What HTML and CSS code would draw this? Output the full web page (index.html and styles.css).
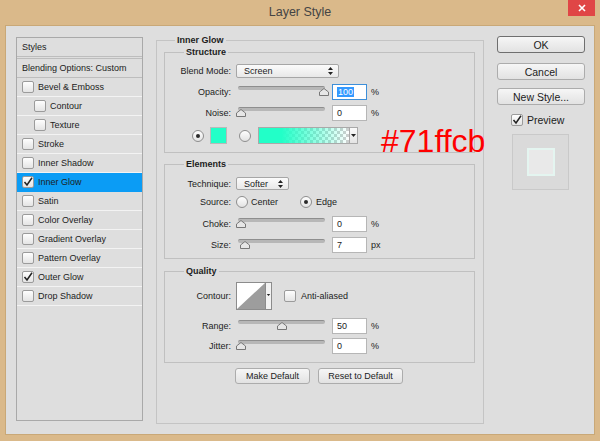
FILE: index.html
```html
<!DOCTYPE html>
<html lang="en">
<head>
    <meta charset="UTF-8">
    <title>Layer Style</title>
    <link rel="stylesheet" href="styles.css">
</head>
<body>

    <div class="window">

        <!-- Title Bar -->
        <div class="titlebar">
            <span></span>
            <span class="title">Layer Style</span>
            <span class="close">
                <svg width="8" height="8" viewBox="0 0 8 8"><path d="M1 1 L7 7 M7 1 L1 7" stroke="#fff" stroke-width="1.6"/></svg>
            </span>
        </div>

        <div class="frame">

            <!-- Styles List -->
            <div class="style-list">
                <div class="item head">Styles</div>
                <div class="item head blend">Blending Options: Custom</div>
                <div class="item"><span class="check"></span>Bevel &amp; Emboss</div>
                <div class="item sub"><span class="check"></span>Contour</div>
                <div class="item sub"><span class="check"></span>Texture</div>
                <div class="item"><span class="check"></span>Stroke</div>
                <div class="item"><span class="check"></span>Inner Shadow</div>
                <div class="item active"><span class="check"><svg width="10" height="10" viewBox="0 0 10 10"><path d="M1.5 5 L4 8 L9 0.8" fill="none" stroke="#222" stroke-width="1.5"/></svg></span>Inner Glow</div>
                <div class="item"><span class="check"></span>Satin</div>
                <div class="item"><span class="check"></span>Color Overlay</div>
                <div class="item"><span class="check"></span>Gradient Overlay</div>
                <div class="item"><span class="check"></span>Pattern Overlay</div>
                <div class="item"><span class="check"><svg width="10" height="10" viewBox="0 0 10 10"><path d="M1.5 5 L4 8 L9 0.8" fill="none" stroke="#222" stroke-width="1.5"/></svg></span>Outer Glow</div>
                <div class="item"><span class="check"></span>Drop Shadow</div>
            </div>

            <!-- Inner Glow Panel -->
            <fieldset class="panel">
                <legend>Inner Glow</legend>

                <fieldset class="group structure">
                    <legend>Structure</legend>
                    <div class="row r-blend">
                        <span class="lbl">Blend Mode:</span>
                        <div class="select blend-select">Screen
                            <svg class="updown" width="5" height="8" viewBox="0 0 5 8"><path d="M0 3 L2.5 0 L5 3 Z M0 5 L2.5 8 L5 5 Z" fill="#222"/></svg>
                        </div>
                    </div>
                    <div class="row r-opacity">
                        <span class="lbl">Opacity:</span>
                        <div class="slider"><div class="track"></div><svg class="thumb" style="left: 83px" width="10" height="8" viewBox="0 0 10 8"><polygon points="5,0.5 9.5,4 9.5,7.5 0.5,7.5 0.5,4" fill="#e6e6e6" stroke="#777"/></svg></div>
                        <div class="field focus"><span class="sel">100</span></div>
                        <span class="unit">%</span>
                    </div>
                    <div class="row r-noise">
                        <span class="lbl">Noise:</span>
                        <div class="slider"><div class="track"></div><svg class="thumb" style="left: 0px" width="10" height="8" viewBox="0 0 10 8"><polygon points="5,0.5 9.5,4 9.5,7.5 0.5,7.5 0.5,4" fill="#e6e6e6" stroke="#777"/></svg></div>
                        <div class="field">0</div>
                        <span class="unit">%</span>
                    </div>
                    <div class="row r-color">
                        <span class="radio on"></span>
                        <span class="swatch"></span>
                        <span class="radio"></span>
                        <div class="gradient">
                            <span class="ramp"></span>
                            <span class="drop"><svg width="5" height="3" viewBox="0 0 5 3"><path d="M0 0 L5 0 L2.5 3 Z" fill="#222"/></svg></span>
                        </div>
                    </div>
                </fieldset>

                <fieldset class="group elements">
                    <legend>Elements</legend>
                    <div class="row r-technique">
                        <span class="lbl">Technique:</span>
                        <div class="select tech-select">Softer
                            <svg class="updown" width="5" height="8" viewBox="0 0 5 8"><path d="M0 3 L2.5 0 L5 3 Z M0 5 L2.5 8 L5 5 Z" fill="#222"/></svg>
                        </div>
                    </div>
                    <div class="row r-source">
                        <span class="lbl">Source:</span>
                        <span class="radio"></span>
                        <span class="opt">Center</span>
                        <span class="radio on edge"></span>
                        <span class="opt">Edge</span>
                    </div>
                    <div class="row r-choke">
                        <span class="lbl">Choke:</span>
                        <div class="slider"><div class="track"></div><svg class="thumb" style="left: 0px" width="10" height="8" viewBox="0 0 10 8"><polygon points="5,0.5 9.5,4 9.5,7.5 0.5,7.5 0.5,4" fill="#e6e6e6" stroke="#777"/></svg></div>
                        <div class="field">0</div>
                        <span class="unit">%</span>
                    </div>
                    <div class="row r-size">
                        <span class="lbl">Size:</span>
                        <div class="slider"><div class="track"></div><svg class="thumb" style="left: 4px" width="10" height="8" viewBox="0 0 10 8"><polygon points="5,0.5 9.5,4 9.5,7.5 0.5,7.5 0.5,4" fill="#e6e6e6" stroke="#777"/></svg></div>
                        <div class="field">7</div>
                        <span class="unit">px</span>
                    </div>
                </fieldset>

                <fieldset class="group quality">
                    <legend>Quality</legend>
                    <div class="row r-contour">
                        <span class="lbl">Contour:</span>
                        <div class="contour">
                            <svg width="36" height="28" viewBox="0 0 36 28">
                                <rect x="0.5" y="0.5" width="35" height="27" fill="#fff" stroke="#8c8c8c"/>
                                <polygon points="1,27 29,1 29,27" fill="#9d9d9d"/>
                                <rect x="29.5" y="0.5" width="6" height="27" fill="#f2f2f2" stroke="#8c8c8c"/>
                                <path d="M30.8 12 L34.2 12 L32.5 14 Z" fill="#222"/>
                            </svg>
                        </div>
                        <span class="check anti"></span>
                        <span class="opt">Anti-aliased</span>
                    </div>
                    <div class="row r-range">
                        <span class="lbl">Range:</span>
                        <div class="slider"><div class="track"></div><svg class="thumb" style="left: 41px" width="10" height="8" viewBox="0 0 10 8"><polygon points="5,0.5 9.5,4 9.5,7.5 0.5,7.5 0.5,4" fill="#e6e6e6" stroke="#777"/></svg></div>
                        <div class="field">50</div>
                        <span class="unit">%</span>
                    </div>
                    <div class="row r-jitter">
                        <span class="lbl">Jitter:</span>
                        <div class="slider"><div class="track"></div><svg class="thumb" style="left: 0px" width="10" height="8" viewBox="0 0 10 8"><polygon points="5,0.5 9.5,4 9.5,7.5 0.5,7.5 0.5,4" fill="#e6e6e6" stroke="#777"/></svg></div>
                        <div class="field">0</div>
                        <span class="unit">%</span>
                    </div>
                </fieldset>

                <div class="defaults">
                    <button class="btn small make">Make Default</button>
                    <button class="btn small reset">Reset to Default</button>
                </div>
            </fieldset>

            <!-- Dialog Actions -->
            <div class="actions">
                <button class="btn big ok">OK</button>
                <button class="btn big cancel">Cancel</button>
                <button class="btn big newstyle">New Style...</button>
                <div class="preview-row">
                    <span class="check"><svg width="10" height="10" viewBox="0 0 10 10"><path d="M1.5 5 L4 8 L9 0.8" fill="none" stroke="#222" stroke-width="1.5"/></svg></span>
                    <span>Preview</span>
                </div>
                <div class="preview-box"><div class="preview-inner"></div></div>
            </div>
        </div>

        <!-- colour note laid over the dialog -->
        <div class="hex-note">#71ffcb</div>
    </div>

</body>
</html>
```

FILE: styles.css
```css
/* General Reset */
* {
    margin: 0;
    padding: 0;
    box-sizing: border-box;
}

body {
    font-family: 'Liberation Sans', Arial, sans-serif;
    color: #1c1c1c;
    background-color: #dab98a;
}

.window {
    position: relative;
    width: 600px;
    height: 441px;
    background-color: #dab98a;
}

/* Title Bar */
.titlebar {
    height: 25px;
    display: grid;
    grid-template-columns: 1fr auto 1fr;
}

.title {
    font-size: 12.5px;
    color: #444;
    line-height: 24px;
}

.close {
    justify-self: end;
    align-self: start;
    width: 27px;
    height: 16px;
    margin-right: 5px;
    background-color: #e04646;
    display: flex;
    align-items: center;
    justify-content: center;
}

/* Dialog Frame */
.frame {
    margin: 0 5px;
    height: 410px;
    border: 1px solid #c9a877;
    background-color: #dedede;
    display: flex;
    align-items: flex-start;
    padding: 8px 9px 0 10px;
}

/* Styles List */
.style-list {
    width: 127px;
    height: 384px;
    margin-top: 3px;
    border: 1px solid #a9a9a9;
    flex: none;
}

.item {
    height: 19px;
    display: flex;
    align-items: center;
    padding-left: 5px;
    font-size: 9px;
    border-bottom: 1px solid #f3f3f3;
}

.item.head {
    border-bottom: 1px solid #bdbdbd;
}

.item.blend {
    height: 20px;
    margin-top: 1px;
    border-top: 1px solid #bdbdbd;
}

.item.sub {
    padding-left: 17px;
}

.item.active {
    background-color: #0b9cf5;
    border-bottom-color: #0b9cf5;
}

.check {
    width: 12px;
    height: 12px;
    flex: none;
    margin-right: 4px;
    border: 1px solid #9b9b9b;
    border-radius: 2px;
    background: linear-gradient(#fefefe, #e4e4e4);
    display: flex;
    align-items: center;
    justify-content: center;
}

/* Main Panel */
fieldset {
    min-width: 0;
}

.panel {
    width: 328px;
    margin-left: 13px;
    border: 1px solid #c4c4c4;
    padding: 0 8px 39px 7px;
    flex: none;
}

legend {
    font-size: 9px;
    font-weight: bold;
    line-height: 12px;
    padding: 0 2px;
}

.panel > legend {
    margin-left: 11px;
}

.group {
    width: 311px;
    border: 1px solid #c0c0c0;
    padding: 0;
}

.group > legend {
    margin-left: 19px;
}

.structure {
    padding-bottom: 8px;
}

.elements {
    margin-top: 5px;
    padding-bottom: 5px;
}

.quality {
    margin-top: 6px;
    padding-bottom: 8px;
}

.row {
    display: flex;
    align-items: center;
    font-size: 9px;
}

.lbl {
    width: 66px;
    margin-right: 5px;
    text-align: right;
    flex: none;
}

.r-blend { margin-top: 6px; height: 14px; }
.r-opacity { margin-top: 6px; height: 16px; }
.r-noise { margin-top: 5px; height: 16px; }
.r-color { margin-top: 6px; height: 17px; padding-left: 27px; }
.r-technique { margin-top: 7px; height: 13px; }
.r-source { margin-top: 6px; height: 12px; }
.r-choke { margin-top: 8px; height: 16px; }
.r-size { margin-top: 5px; height: 16px; }
.r-contour { margin-top: 5px; height: 28px; }
.r-range { margin-top: 8px; height: 16px; }
.r-jitter { margin-top: 4px; height: 16px; }

/* Dropdowns */
.select {
    height: 100%;
    border: 1px solid #a6a6a6;
    border-radius: 2px;
    background: linear-gradient(#fbfbfb, #e8e8e8);
    display: flex;
    align-items: center;
    justify-content: space-between;
    padding: 0 5px 0 7px;
}

.blend-select {
    width: 103px;
}

.tech-select {
    width: 53px;
}

/* Sliders */
.slider {
    position: relative;
    width: 92px;
    height: 16px;
    margin-right: 4px;
    flex: none;
}

.track {
    height: 4px;
    margin: 2px 3px 0 2px;
    border-radius: 2px;
    border-top: 1px solid #8e8e8e;
    background-color: #b7b7b7;
}

.thumb {
    position: absolute;
    top: 4px;
    display: block;
}

/* Number Fields */
.field {
    width: 35px;
    height: 16px;
    flex: none;
    border: 1px solid #b6b6b6;
    background-color: #fff;
    line-height: 14px;
    padding-left: 4px;
}

.field.focus {
    border-color: #3d8fd9;
}

.sel {
    background-color: #3399ff;
    color: #fff;
    padding: 0 1px;
}

.unit {
    margin-left: 4px;
}

/* Colour Row */
.radio {
    width: 12px;
    height: 12px;
    flex: none;
    border-radius: 50%;
    border: 1px solid #8e8e8e;
    background: linear-gradient(#fefefe, #e2e2e2);
    display: flex;
    align-items: center;
    justify-content: center;
}

.radio.on::after {
    content: "";
    width: 4px;
    height: 4px;
    border-radius: 50%;
    background-color: #2a2a2a;
}

.swatch {
    width: 17px;
    height: 17px;
    margin: 0 12px 0 6px;
    background-color: #22ffc8;
    border: 1px solid #b9b9b9;
}

.gradient {
    width: 100px;
    height: 17px;
    margin-left: 7px;
    display: flex;
    border: 1px solid #a9a9a9;
}

.ramp {
    flex: 1;
    background:
        linear-gradient(to right, #22ffc8 25%, rgba(34, 255, 200, 0) 100%),
        repeating-conic-gradient(#cfcfcf 0 25%, #fff 0 50%) 0 0 / 6px 6px;
}

.drop {
    width: 8px;
    border-left: 1px solid #a9a9a9;
    background: linear-gradient(#fafafa, #e4e4e4);
    display: flex;
    align-items: center;
    justify-content: center;
}

/* Source + Contour */
.r-source .radio {
    margin-right: 3px;
}

.r-source .radio.edge {
    margin-left: 22px;
    margin-right: 4px;
}

.contour {
    width: 36px;
    height: 28px;
    flex: none;
}

.check.anti {
    margin-left: 12px;
    margin-right: 5px;
}

/* Buttons */
.btn {
    font-family: 'Liberation Sans', Arial, sans-serif;
    color: #1c1c1c;
    border: 1px solid #acacac;
    border-radius: 3px;
    background: linear-gradient(#f6f6f6, #e2e2e2);
    cursor: pointer;
}

.defaults {
    display: flex;
    margin-top: 5px;
    padding-left: 71px;
}

.btn.small {
    height: 16px;
    font-size: 9px;
}

.btn.make {
    width: 75px;
    margin-right: 8px;
}

.btn.reset {
    width: 85px;
}

.actions {
    width: 88px;
    margin-left: 13px;
    margin-top: 2px;
    flex: none;
    display: flex;
    flex-direction: column;
}

.btn.big {
    height: 17px;
    font-size: 10.5px;
}

.btn.ok {
    border-color: #6f6f6f;
}

.btn.cancel {
    margin-top: 10px;
}

.btn.newstyle {
    margin-top: 8px;
}

.preview-row {
    display: flex;
    align-items: center;
    height: 12px;
    margin-top: 9px;
    padding-left: 14px;
    font-size: 10.5px;
}

.preview-box {
    width: 57px;
    height: 56px;
    margin: 8px 0 0 15px;
    border: 1px solid #c9c9c9;
    background-color: #dadada;
    display: flex;
    align-items: center;
    justify-content: center;
}

.preview-inner {
    width: 28px;
    height: 28px;
    background-color: #e9e9e9;
    border: 2px solid #e4f5f0;
}

/* Colour note */
.hex-note {
    position: absolute;
    left: 381px;
    top: 125px;
    font-size: 32px;
    line-height: 32px;
    color: #ff0000;
}
```
